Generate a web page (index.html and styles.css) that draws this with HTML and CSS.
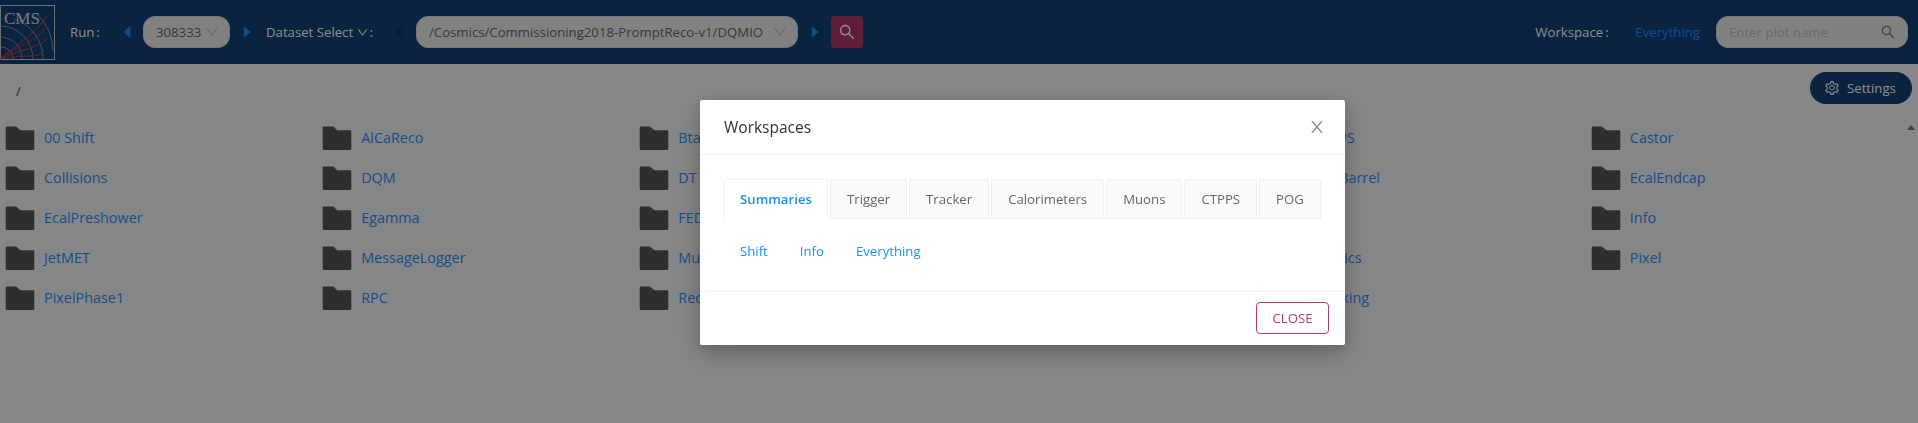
FILE: index.html

```html
<!DOCTYPE html>
<html lang="en">
<head>
  <meta charset="UTF-8">
  <title>DQM GUI</title>
  <link rel="stylesheet" href="styles.css">
</head>
<body>
  <svg class="defs" width="0" height="0">
    <symbol id="i-folder" viewBox="64 64 896 896"><path d="M880 298.4H521L403.7 190.8a8.15 8.15 0 0 0-5.5-2.2H144c-17.7 0-32 14.3-32 32v592c0 17.7 14.3 32 32 32h736c17.7 0 32-14.3 32-32V330.4c0-17.7-14.3-32-32-32z"/></symbol>
    <symbol id="i-search" viewBox="64 64 896 896"><path d="M909.6 854.5L649.9 594.8C690.2 542.7 712 479 712 412c0-80.2-31.3-155.4-87.9-212.1-56.6-56.7-132-87.9-212.1-87.9s-155.5 31.3-212.1 87.9C143.2 256.5 112 331.8 112 412c0 80.1 31.3 155.5 87.9 212.1C256.5 680.8 331.8 712 412 712c67 0 130.6-21.8 182.7-62l259.7 259.6a8.2 8.2 0 0 0 11.6 0l43.6-43.5a8.2 8.2 0 0 0 0-11.6zM570.4 570.4C528 612.7 471.8 636 412 636s-116-23.3-158.4-65.6C211.3 528 188 471.8 188 412s23.3-116.1 65.6-158.4C296 211.3 352.2 188 412 188s116.1 23.2 158.4 65.6S636 352.2 636 412s-23.3 116.1-65.6 158.4z"/></symbol>
    <symbol id="i-down" viewBox="64 64 896 896"><path d="M884 256h-75c-5.1 0-9.9 2.5-12.9 6.6L512 654.2 227.9 262.6c-3-4.1-7.8-6.6-12.9-6.6h-75c-6.5 0-10.3 7.4-6.5 12.7l352.6 486.1c12.8 17.6 39 17.6 51.7 0l352.6-486.1c3.9-5.3.1-12.7-6.4-12.7z"/></symbol>
    <symbol id="i-left" viewBox="64 64 896 896"><path d="M689 165.1L308.2 493.5c-10.9 9.4-10.9 27.5 0 37L689 858.9c14.2 12.2 35 1.2 35-18.5V183.6c0-19.7-20.8-30.7-35-18.5z"/></symbol>
    <symbol id="i-right" viewBox="64 64 896 896"><path d="M715.8 493.5L335 165.1c-14.2-12.2-35-1.2-35 18.5v656.8c0 19.7 20.8 30.7 35 18.5l380.8-328.4c10.9-9.4 10.9-27.6 0-37z"/></symbol>
    <symbol id="i-close" viewBox="64 64 896 896"><path d="M563.8 512l262.5-312.9c4.4-5.2.7-13.1-6.1-13.1h-79.8c-4.7 0-9.2 2.1-12.3 5.7L511.6 449.8 295.1 191.7c-3-3.6-7.5-5.7-12.3-5.7H203c-6.8 0-10.5 7.9-6.1 13.1L459.4 512 196.9 824.9A7.95 7.95 0 0 0 203 838h79.8c4.7 0 9.2-2.1 12.3-5.7l216.5-258.1 216.5 258.1c3 3.6 7.5 5.7 12.3 5.7h79.8c6.8 0 10.5-7.9 6.1-13.1L563.8 512z"/></symbol>
    <symbol id="i-setting" viewBox="64 64 896 896"><path d="M924.8 625.7l-65.5-56c3.1-19 4.7-38.4 4.7-57.8s-1.6-38.8-4.7-57.8l65.5-56a32.03 32.03 0 0 0 9.3-35.2l-.9-2.6a443.74 443.74 0 0 0-79.7-137.9l-1.8-2.1a32.12 32.12 0 0 0-35.1-9.5l-81.3 28.9c-30-24.6-63.5-44-99.7-57.6l-15.7-85a32.05 32.05 0 0 0-25.8-25.7l-2.7-.5c-52.1-9.4-106.9-9.4-159 0l-2.7.5a32.05 32.05 0 0 0-25.8 25.7l-15.8 85.4a351.86 351.86 0 0 0-99 57.4l-81.9-29.1a32 32 0 0 0-35.1 9.5l-1.8 2.1a446.02 446.02 0 0 0-79.7 137.9l-.9 2.6c-4.5 12.5-.8 26.5 9.3 35.2l66.3 56.6c-3.1 18.8-4.6 38-4.6 57.1 0 19.2 1.5 38.4 4.6 57.1L99 625.5a32.03 32.03 0 0 0-9.3 35.2l.9 2.6c18.1 50.4 44.9 96.9 79.7 137.9l1.8 2.1a32.12 32.12 0 0 0 35.1 9.5l81.9-29.1c29.8 24.5 63.1 43.9 99 57.4l15.8 85.4a32.05 32.05 0 0 0 25.8 25.7l2.7.5a449.4 449.4 0 0 0 159 0l2.7-.5a32.05 32.05 0 0 0 25.8-25.7l15.7-85a350 350 0 0 0 99.7-57.6l81.3 28.9a32 32 0 0 0 35.1-9.5l1.8-2.1c34.8-41.1 61.6-87.5 79.7-137.9l.9-2.6c4.5-12.3.8-26.3-9.3-35zM788.3 465.9c2.5 15.1 3.8 30.6 3.8 46.1s-1.3 31-3.8 46.1l-6.6 40.1 74.7 63.9a370.03 370.03 0 0 1-42.6 73.6L721 702.8l-31.4 25.8c-23.9 19.6-50.5 35-79.3 45.8l-38.1 14.3-17.9 97a377.5 377.5 0 0 1-85 0l-17.9-97.2-37.8-14.5c-28.5-10.8-55-26.2-78.7-45.7l-31.4-25.9-93.4 33.2c-17-22.9-31.2-47.6-42.6-73.6l75.5-64.5-6.5-40c-2.4-14.9-3.7-30.3-3.7-45.5 0-15.3 1.2-30.6 3.7-45.5l6.5-40-75.5-64.5c11.3-26.1 25.6-50.7 42.6-73.6l93.4 33.2 31.4-25.9c23.7-19.5 50.2-34.9 78.7-45.7l37.9-14.3 17.9-97.2c28.1-3.2 56.8-3.2 85 0l17.9 97 38.1 14.3c28.7 10.8 55.4 26.2 79.3 45.8l31.4 25.8 92.8-32.9c17 22.9 31.2 47.6 42.6 73.6L781.8 426l6.5 39.9zM512 326c-97.2 0-176 78.8-176 176s78.8 176 176 176 176-78.8 176-176-78.8-176-176-176zm79.2 255.2A111.6 111.6 0 0 1 512 614c-29.9 0-58-11.7-79.2-32.8A111.6 111.6 0 0 1 400 502c0-29.9 11.7-58 32.8-79.2C454 401.6 482.1 390 512 390c29.9 0 58 11.6 79.2 32.8A111.6 111.6 0 0 1 624 502c0 29.9-11.7 58-32.8 79.2z"/></symbol>
  </svg>

  <header class="topbar">
    <svg class="logo" viewBox="0 0 55 55">
      <rect x="0.5" y="0.5" width="54" height="54" class="logo-box"/>
      <g class="logo-arcs">
        <path d="M0 42A12 12 0 0 1 13 54"/>
        <path d="M0 32A22 22 0 0 1 22 54"/>
        <path d="M0 21A33 33 0 0 1 33 54"/>
        <path d="M14 14A42 42 0 0 1 43 54"/>
        <path d="M36 8A53 53 0 0 1 53 46"/>
      </g>
      <g class="logo-tracks">
        <path d="M0 54C18 38 32 32 49 9"/>
        <path d="M0 54C16 40 36 38 47 21"/>
        <path d="M0 54C20 44 38 44 47 33"/>
        <path d="M2 54C16 50 30 52 38 50C41 49 43 47 44 45"/>
      </g>
      <text x="4" y="19" class="logo-text">CMS</text>
    </svg>

    <span class="label label-run">Run<i>:</i></span>
    <svg class="caret caret-first"><use href="#i-left"/></svg>
    <div class="select select-run"><span>308333</span><svg class="select-arrow"><use href="#i-down"/></svg></div>
    <svg class="caret"><use href="#i-right"/></svg>

    <span class="label label-dataset">Dataset Select <svg class="label-arrow"><use href="#i-down"/></svg><i>:</i></span>
    <svg class="caret caret-off"><use href="#i-left"/></svg>
    <div class="select select-dataset"><span>/Cosmics/Commissioning2018-PromptReco-v1/DQMIO</span><svg class="select-arrow"><use href="#i-down"/></svg></div>
    <svg class="caret"><use href="#i-right"/></svg>
    <button class="search-btn"><svg><use href="#i-search"/></svg></button>

    <div class="topbar-right">
      <span class="label">Workspace<i>:</i></span>
      <a class="link-btn">Everything</a>
      <div class="plot-search"><span>Enter plot name</span><svg><use href="#i-search"/></svg></div>
    </div>
  </header>

  <main class="content">
    <div class="path-row">
      <span class="crumb">/</span>
      <button class="settings-btn"><svg><use href="#i-setting"/></svg>Settings</button>
    </div>
    <div class="folders">
      <div class="folder"><svg><use href="#i-folder"/></svg><a>00 Shift</a></div>
      <div class="folder"><svg><use href="#i-folder"/></svg><a>AlCaReco</a></div>
      <div class="folder"><svg><use href="#i-folder"/></svg><a>Btag</a></div>
      <div class="folder"><svg><use href="#i-folder"/></svg><a>CSC</a></div>
      <div class="folder"><svg><use href="#i-folder"/></svg><a>CTPPS</a></div>
      <div class="folder"><svg><use href="#i-folder"/></svg><a>Castor</a></div>
      <div class="folder"><svg><use href="#i-folder"/></svg><a>Collisions</a></div>
      <div class="folder"><svg><use href="#i-folder"/></svg><a>DQM</a></div>
      <div class="folder"><svg><use href="#i-folder"/></svg><a>DT</a></div>
      <div class="folder"><svg><use href="#i-folder"/></svg><a>Data</a></div>
      <div class="folder"><svg><use href="#i-folder"/></svg><a>EcalBarrel</a></div>
      <div class="folder"><svg><use href="#i-folder"/></svg><a>EcalEndcap</a></div>
      <div class="folder"><svg><use href="#i-folder"/></svg><a>EcalPreshower</a></div>
      <div class="folder"><svg><use href="#i-folder"/></svg><a>Egamma</a></div>
      <div class="folder"><svg><use href="#i-folder"/></svg><a>FED</a></div>
      <div class="folder"><svg><use href="#i-folder"/></svg><a>HLT</a></div>
      <div class="folder"><svg><use href="#i-folder"/></svg><a>Hcal</a></div>
      <div class="folder"><svg><use href="#i-folder"/></svg><a>Info</a></div>
      <div class="folder"><svg><use href="#i-folder"/></svg><a>JetMET</a></div>
      <div class="folder"><svg><use href="#i-folder"/></svg><a>MessageLogger</a></div>
      <div class="folder"><svg><use href="#i-folder"/></svg><a>Muons</a></div>
      <div class="folder"><svg><use href="#i-folder"/></svg><a>OfflinePV</a></div>
      <div class="folder"><svg><use href="#i-folder"/></svg><a>Physics</a></div>
      <div class="folder"><svg><use href="#i-folder"/></svg><a>Pixel</a></div>
      <div class="folder"><svg><use href="#i-folder"/></svg><a>PixelPhase1</a></div>
      <div class="folder"><svg><use href="#i-folder"/></svg><a>RPC</a></div>
      <div class="folder"><svg><use href="#i-folder"/></svg><a>RecoTau</a></div>
      <div class="folder"><svg><use href="#i-folder"/></svg><a>SiStrip</a></div>
      <div class="folder"><svg><use href="#i-folder"/></svg><a>Tracking</a></div>
      <span class="scroll-up"></span>
    </div>
  </main>

  <div class="mask">
    <section class="modal">
      <div class="modal-head">
        <h3>Workspaces</h3>
        <svg class="modal-x"><use href="#i-close"/></svg>
      </div>
      <div class="modal-body">
        <div class="tabs">
          <div class="tab active">Summaries</div>
          <div class="tab">Trigger</div>
          <div class="tab">Tracker</div>
          <div class="tab">Calorimeters</div>
          <div class="tab">Muons</div>
          <div class="tab">CTPPS</div>
          <div class="tab">POG</div>
        </div>
        <div class="tab-links">
          <a class="link-btn">Shift</a>
          <a class="link-btn">Info</a>
          <a class="link-btn">Everything</a>
        </div>
      </div>
      <div class="modal-foot">
        <button class="close-btn">CLOSE</button>
      </div>
    </section>
  </div>
</body>
</html>
```

FILE: styles.css

```css
* { box-sizing: border-box; }
body { margin: 0; height: 423px; overflow: hidden; background: #f3f4f8; color: #333; font-family: "Open Sans", "Noto Sans", sans-serif; font-size: 13.2px; line-height: 22px; }
.defs { display: block; }
button { font: inherit; cursor: pointer; }

.topbar { display: flex; align-items: center; height: 64px; background: #134074; color: #fff; padding-right: 10px; }
.logo { width: 55px; height: 55px; margin-right: 15px; flex: none; }
.logo-box { fill: none; stroke: #c4ccd4; }
.logo-arcs path { fill: none; stroke: #aeb6bf; stroke-width: .7; }
.logo-tracks path { fill: none; stroke: #d33a40; stroke-width: 1; }
.logo-text { font-family: "Liberation Serif", serif; font-size: 17px; fill: #dfe3e8; }

.label { white-space: nowrap; }
.label i { font-style: normal; margin-left: 2px; }
.label-run { width: 50px; }
.label-dataset { margin-left: 12.5px; width: 126px; }
.label-arrow { width: 11px; height: 11px; fill: #fff; vertical-align: -1px; }

.caret { width: 14px; height: 14px; fill: #1890ff; flex: none; }
.caret-first { margin-right: 9px; }
.caret-off { fill: #0d3760; margin-right: 10px; }
.select-run + .caret { margin-left: 9.5px; }
.select-dataset + .caret { margin-left: 9.5px; margin-right: 9.5px; }

.select { display: flex; align-items: center; justify-content: space-between; height: 32px; padding: 0 10px 0 12px; background: #ececec; border: 1px solid #d9d9d9; border-radius: 12px; color: #666; white-space: nowrap; flex: none; }
.select-run { width: 87px; }
.select-dataset { width: 382px; }
.select-arrow { width: 14px; height: 14px; fill: #c4c4c4; flex: none; }

.search-btn { display: flex; align-items: center; justify-content: center; width: 32px; height: 32px; padding: 0; border: 0; border-radius: 4px; background: #ab3866; }
.search-btn svg { width: 16px; height: 16px; fill: #fff; }

.topbar-right { display: flex; align-items: center; margin-left: auto; }
.topbar-right .label { width: 84px; }
.link-btn { display: inline-block; padding: 5px 16px; height: 32px; color: #1890ff; white-space: nowrap; }

.plot-search { display: flex; align-items: center; justify-content: space-between; width: 192px; height: 32px; padding: 0 12px; background: #ececec; border: 1px solid #d9d9d9; border-radius: 12px; color: #bfbfbf; }
.plot-search svg { width: 14px; height: 14px; fill: #777; }

.path-row { display: flex; justify-content: space-between; align-items: flex-start; padding: 8px 6px 0 16px; height: 54px; }
.crumb { line-height: 38px; color: #555; }
.settings-btn { display: flex; align-items: center; gap: 8px; height: 32px; width: 102px; padding: 0 0 0 15px; border: 0; border-radius: 16px; background: #134074; color: #fff; }
.settings-btn svg { width: 14px; height: 14px; fill: #fff; }

.folders { position: relative; display: grid; grid-template-columns: repeat(6, 1fr); padding: 0 11px 0 4px; }
.folder { display: flex; align-items: center; gap: 8px; height: 40px; }
.folder svg { width: 32px; height: 32px; fill: #555; flex: none; }
.folder a { color: #2d8cf0; white-space: nowrap; font-size: 14.4px; }
.scroll-up { position: absolute; right: 3px; top: 7px; border: 4px solid transparent; border-top: 0; border-bottom: 5px solid #777; }

.mask { position: fixed; inset: 0; background: rgba(0, 0, 0, .45); }
.modal { width: 645px; margin: 100px 0 0 700px; background: #fff; border-radius: 2px; box-shadow: 0 4px 12px rgba(0, 0, 0, .15), 0 9px 28px rgba(0, 0, 0, .2); }
.modal-head { display: flex; align-items: center; justify-content: space-between; height: 55px; padding: 0 18px 0 24px; border-bottom: 1px solid #f0f0f0; }
.modal-head h3 { margin: 0; font-size: 15.5px; font-weight: 400; line-height: 22px; color: #333; }
.modal-x { width: 16px; height: 16px; fill: #8c8c8c; margin: -1px 2px 0 0; }
.modal-body { padding: 24px; }

.tabs { display: flex; gap: 2px; width: 597px; height: 40px; border-bottom: 1px solid #f0f0f0; margin-bottom: 16px; }
.tab { height: 40px; padding: 8px 16px; background: #fafafa; border: 1px solid #f0f0f0; border-radius: 2px 2px 0 0; color: #666; white-space: nowrap; }
.tab.active { width: 104px; padding: 8px 0; text-align: center; background: #fff; border-bottom-color: #fff; color: #1890ff; font-weight: 600; }
.tab-links { display: flex; height: 32px; }

.modal-foot { display: flex; justify-content: flex-end; padding: 10px 16px 11px; border-top: 1px solid #f0f0f0; }
.close-btn { width: 73px; height: 32px; padding: 0; background: #fff; border: 1px solid #b83a67; border-radius: 4px; color: #b83a67; }
```
